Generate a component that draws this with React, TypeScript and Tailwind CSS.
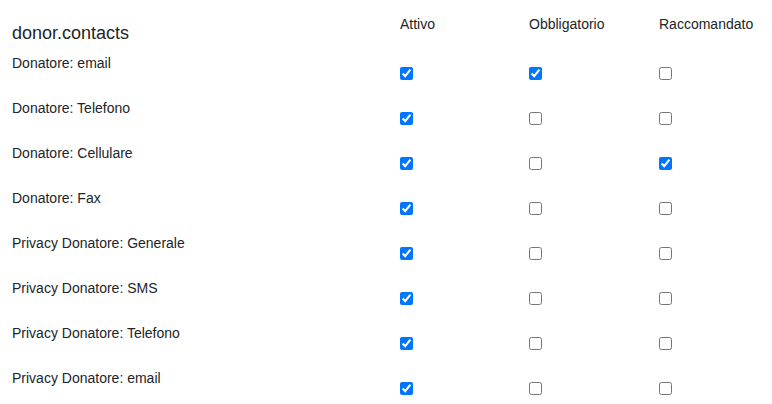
import React from "react";

type Row = { label: string; active: boolean; required: boolean; recommended: boolean };

const rows: Row[] = [
  { label: "Donatore: email", active: true, required: true, recommended: false },
  { label: "Donatore: Telefono", active: true, required: false, recommended: false },
  { label: "Donatore: Cellulare", active: true, required: false, recommended: true },
  { label: "Donatore: Fax", active: true, required: false, recommended: false },
  { label: "Privacy Donatore: Generale", active: true, required: false, recommended: false },
  { label: "Privacy Donatore: SMS", active: true, required: false, recommended: false },
  { label: "Privacy Donatore: Telefono", active: true, required: false, recommended: false },
  { label: "Privacy Donatore: email", active: true, required: false, recommended: false },
];

function Check({ checked }: { checked: boolean }) {
  return (
    <div className="pt-[14px]">
      <input type="checkbox" defaultChecked={checked} className="m-0 block h-[13px] w-[13px]" />
    </div>
  );
}

export default function App() {
  return (
    <div className="w-[772px] h-[404px] overflow-hidden bg-white text-[#212529] font-['Liberation_Sans',Arial,sans-serif]">
      <div className="grid grid-cols-[400px_129px_130px_1fr]">
        <div className="h-[53px] pl-3 pt-[20px] text-[18px] leading-[26px]">donor.contacts</div>
        <div className="pt-[14px] text-[14px] leading-[20px]">Attivo</div>
        <div className="pt-[14px] text-[14px] leading-[20px]">Obbligatorio</div>
        <div className="pt-[14px] text-[14px] leading-[20px]">Raccomandato</div>

        {rows.map((r) => (
          <React.Fragment key={r.label}>
            <div className="h-[45px] pl-3 text-[14px] leading-[20px]">{r.label}</div>
            <Check checked={r.active} />
            <Check checked={r.required} />
            <Check checked={r.recommended} />
          </React.Fragment>
        ))}
      </div>
    </div>
  );
}
